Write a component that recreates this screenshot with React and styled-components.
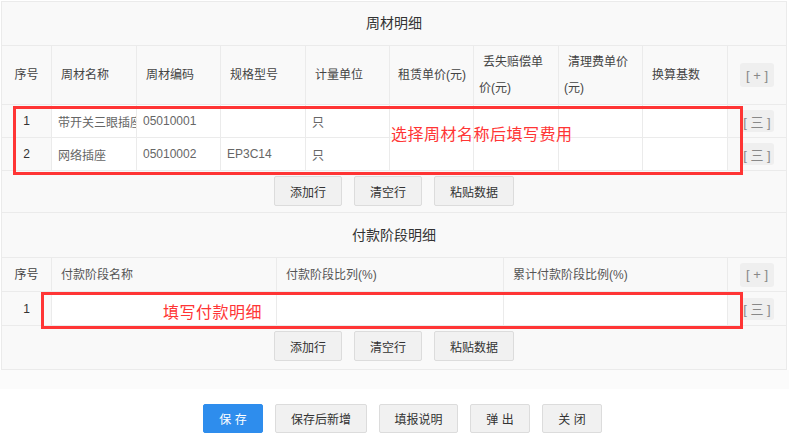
import React from 'react';
import styled, { createGlobalStyle } from 'styled-components';

const GlobalStyle = createGlobalStyle`
  html, body {
    margin: 0;
    padding: 0;
    background: #fff;
  }
  body {
    font-family: "Liberation Sans", "Noto Sans CJK SC", sans-serif;
    font-size: 12px;
    color: #333;
  }
  * { box-sizing: border-box; }
`;

const Page = styled.div`
  position: relative;
  width: 789px;
  height: 440px;
  overflow: hidden;
`;

const Panel = styled.div`
  width: 786px;
  margin: 1px 0 0 1px;
  border: 1px solid #ebebeb;
  background: #f9f9f9;
`;

const Title = styled.div`
  height: ${p => p.h}px;
  line-height: ${p => p.h - 1}px;
  text-align: center;
  font-size: 14px;
  color: #333;
  border-bottom: 1px solid #ebebeb;
`;

const Row = styled.div`
  display: grid;
  grid-template-columns: ${p => p.cols};
  height: ${p => p.h}px;
  border-bottom: 1px solid #ebebeb;
`;

const HeadCell = styled.div`
  display: flex;
  align-items: center;
  padding: 0 6px 0 ${p => p.pl ?? 9}px;
  border-right: 1px solid #ebebeb;
  color: ${p => p.tone || '#444'};
  line-height: 26px;
  text-indent: ${p => p.indent || 0}px;
  justify-content: ${p => (p.center ? 'center' : 'flex-start')};
`;

const Cell = styled.div`
  display: flex;
  align-items: center;
  padding: 0 6px;
  border-right: 1px solid #ebebeb;
  background: #fff;
  color: #666;
  white-space: nowrap;
  overflow: hidden;
`;

const IndexCell = styled(Cell)`
  justify-content: center;
  background: #f9f9f9;
  color: #333;
`;

const ActionCell = styled.div`
  display: flex;
  align-items: center;
  justify-content: center;
  background: #f9f9f9;
`;

const MiniButton = styled.span`
  display: inline-flex;
  align-items: center;
  justify-content: center;
  width: 34px;
  height: ${p => p.h || 23}px;
  background: #efefef;
  border-radius: 3px;
  color: #888;
  font-size: 13px;
  white-space: pre;
`;

const ButtonBar = styled.div`
  display: flex;
  justify-content: center;
  gap: 12px;
  height: ${p => p.h}px;
  padding-top: 5px;
  border-bottom: ${p => (p.last ? 'none' : '1px solid #ebebeb')};
`;

const Button = styled.button`
  height: 30px;
  padding: 0 15px;
  border: 1px solid #dcdcdc;
  border-radius: 2px;
  background: #f1f1f1;
  color: #333;
  font-family: inherit;
  font-size: 12px;
`;

const Band = styled.div`
  height: 19px;
  background: #fbfbfb;
`;

const Footer = styled.div`
  display: flex;
  justify-content: center;
  gap: 12px;
  padding: 15px 0 0 16px;
`;

const FooterButton = styled.button`
  height: 29px;
  width: ${p => p.w}px;
  border: 1px solid ${p => (p.primary ? '#2e8ded' : '#dcdcdc')};
  border-radius: 2px;
  background: ${p => (p.primary ? '#2e8ded' : '#f1f1f1')};
  color: ${p => (p.primary ? '#fff' : '#333')};
  font-family: inherit;
  font-size: 12px;
  white-space: pre;
`;

const Highlight = styled.div`
  position: absolute;
  border: 3px solid #ff3535;
  pointer-events: none;
`;

const Note = styled.div`
  position: absolute;
  color: #ff3535;
  font-size: 16px;
  letter-spacing: 0.5px;
  line-height: 20px;
  white-space: nowrap;
`;

const materialCols = '50px 85px 84px 85px 84px 84px 85px 84px 85px 1fr';
const paymentCols = '50px 225px 227px 224px 1fr';

const materials = [
  { no: 1, name: '带开关三眼插座', code: '05010001', spec: '', unit: '只' },
  { no: 2, name: '网络插座', code: '05010002', spec: 'EP3C14', unit: '只' },
];

function MaterialTable() {
  return (
    <>
      <Title h={44}>周材明细</Title>
      <Row cols={materialCols} h={59}>
        <HeadCell center pl={6}>序号</HeadCell>
        <HeadCell>周材名称</HeadCell>
        <HeadCell>周材编码</HeadCell>
        <HeadCell>规格型号</HeadCell>
        <HeadCell>计量单位</HeadCell>
        <HeadCell pl={8}>租赁单价(元)</HeadCell>
        <HeadCell pl={5} indent={4}>丢失赔偿单价(元)</HeadCell>
        <HeadCell pl={5} indent={4}>清理费单价(元)</HeadCell>
        <HeadCell>换算基数</HeadCell>
        <ActionCell>
          <MiniButton h={24}>[ + ]</MiniButton>
        </ActionCell>
      </Row>
      {materials.map(m => (
        <Row key={m.no} cols={materialCols} h={33}>
          <IndexCell>{m.no}</IndexCell>
          <Cell>{m.name}</Cell>
          <Cell>{m.code}</Cell>
          <Cell>{m.spec}</Cell>
          <Cell>{m.unit}</Cell>
          <Cell />
          <Cell />
          <Cell />
          <Cell />
          <ActionCell>
            <MiniButton h={22}>[ 三 ]</MiniButton>
          </ActionCell>
        </Row>
      ))}
      <ButtonBar h={42}>
        <Button>添加行</Button>
        <Button>清空行</Button>
        <Button>粘贴数据</Button>
      </ButtonBar>
    </>
  );
}

function PaymentTable() {
  return (
    <>
      <Title h={45}>付款阶段明细</Title>
      <Row cols={paymentCols} h={34}>
        <HeadCell center pl={6}>序号</HeadCell>
        <HeadCell tone="#555">付款阶段名称</HeadCell>
        <HeadCell tone="#555">付款阶段比列(%)</HeadCell>
        <HeadCell tone="#555">累计付款阶段比例(%)</HeadCell>
        <ActionCell>
          <MiniButton h={24}>[ + ]</MiniButton>
        </ActionCell>
      </Row>
      <Row cols={paymentCols} h={34}>
        <IndexCell>1</IndexCell>
        <Cell />
        <Cell />
        <Cell />
        <ActionCell>
          <MiniButton h={22}>[ 三 ]</MiniButton>
        </ActionCell>
      </Row>
      <ButtonBar h={43} last>
        <Button>添加行</Button>
        <Button>清空行</Button>
        <Button>粘贴数据</Button>
      </ButtonBar>
    </>
  );
}

export default function App() {
  return (
    <Page>
      <GlobalStyle />
      <Panel>
        <MaterialTable />
        <PaymentTable />
      </Panel>
      <Band />
      <Footer>
        <FooterButton primary w={60}>保 存</FooterButton>
        <FooterButton w={92}>保存后新增</FooterButton>
        <FooterButton w={79}>填报说明</FooterButton>
        <FooterButton w={60}>弹 出</FooterButton>
        <FooterButton w={60}>关 闭</FooterButton>
      </Footer>

      <Highlight style={{ left: 13, top: 106, width: 730, height: 69 }} />
      <Note style={{ left: 391, top: 125 }}>选择周材名称后填写费用</Note>
      <Highlight style={{ left: 41, top: 292, width: 702, height: 37 }} />
      <Note style={{ left: 163, top: 303 }}>填写付款明细</Note>
    </Page>
  );
}
